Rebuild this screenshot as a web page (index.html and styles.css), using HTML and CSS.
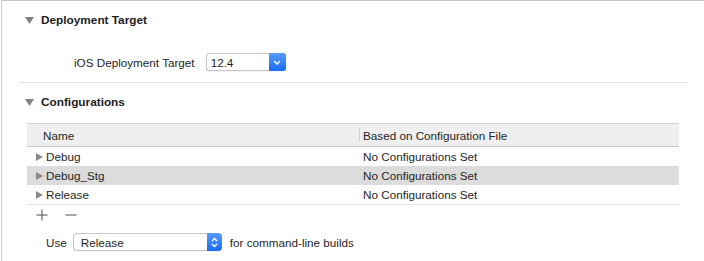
FILE: index.html
```html
<!DOCTYPE html>
<html>
<head>
<meta charset="utf-8">
<link rel="stylesheet" href="styles.css">
</head>
<body>
<div class="pane">
  <div class="section-head first">
    <svg class="tri-down" width="9" height="7" viewBox="0 0 9 7"><path d="M0 0H9L4.5 7Z" fill="#808080"/></svg>
    <span class="title">Deployment Target</span>
  </div>
  <div class="target-row">
    <span class="label">iOS Deployment Target</span>
    <div class="popup small">
      <span class="popup-text">12.4</span>
      <span class="popup-btn">
        <svg width="8" height="5" viewBox="0 0 8 5"><path d="M1 1L4 4L7 1" fill="none" stroke="#fff" stroke-width="1.4"/></svg>
      </span>
    </div>
  </div>
  <div class="sep"></div>
  <div class="section-head second">
    <svg class="tri-down" width="9" height="7" viewBox="0 0 9 7"><path d="M0 0H9L4.5 7Z" fill="#808080"/></svg>
    <span class="title">Configurations</span>
  </div>
  <div class="table">
    <div class="thead">
      <div class="col1 th">Name</div>
      <div class="col2 th"><span class="colsep"></span>Based on Configuration File</div>
    </div>
    <div class="row">
      <div class="col1"><svg class="tri-right" width="7" height="8" viewBox="0 0 7 8"><path d="M0 0L7 4L0 8Z" fill="#8a8a8a"/></svg>Debug</div>
      <div class="col2">No Configurations Set</div>
    </div>
    <div class="row sel">
      <div class="col1"><svg class="tri-right" width="7" height="8" viewBox="0 0 7 8"><path d="M0 0L7 4L0 8Z" fill="#8a8a8a"/></svg>Debug_Stg</div>
      <div class="col2">No Configurations Set</div>
    </div>
    <div class="row">
      <div class="col1"><svg class="tri-right" width="7" height="8" viewBox="0 0 7 8"><path d="M0 0L7 4L0 8Z" fill="#8a8a8a"/></svg>Release</div>
      <div class="col2">No Configurations Set</div>
    </div>
  </div>
  <div class="addrem">
    <svg width="12" height="12" viewBox="0 0 12 12"><path d="M6 0.5V11.5M0.5 6H11.5" stroke="#4a4a4a" stroke-width="1"/></svg>
    <svg class="minus" width="12" height="12" viewBox="0 0 12 12"><path d="M0.5 6H11.5" stroke="#4a4a4a" stroke-width="1"/></svg>
  </div>
  <div class="use-row">
    <span class="label">Use</span>
    <div class="popup wide">
      <span class="popup-text">Release</span>
      <span class="popup-btn stepper">
        <svg width="7" height="11" viewBox="0 0 7 11"><path d="M1 4L3.5 1.5L6 4M1 7L3.5 9.5L6 7" fill="none" stroke="#fff" stroke-width="1.3"/></svg>
      </span>
    </div>
    <span class="label">for command-line builds</span>
  </div>
</div>
</body>
</html>
```

FILE: styles.css
```css
html, body {
  margin: 0;
  padding: 0;
  background: #fff;
}
body {
  width: 704px;
  height: 261px;
  overflow: hidden;
  font-family: "Liberation Sans", Arial, sans-serif;
  font-size: 11.7px;
  color: #262626;
}
.pane {
  margin-left: 1px;
  height: 260px;
  border-top: 1px solid #c4c4c4;
  border-left: 1px solid #d0d0d0;
  display: flex;
  flex-direction: column;
}
.section-head {
  display: flex;
  align-items: center;
  padding-left: 23px;
  height: 18px;
}
.section-head.first { margin-top: 10px; }
.section-head.second { margin-top: 10px; }
.tri-down { margin-right: 7px; }
.title {
  font-weight: bold;
  font-size: 11.8px;
  color: #1e1e1e;
}
.target-row {
  display: flex;
  align-items: center;
  margin-top: 24px;
  padding-left: 72px;
  height: 18px;
}
.target-row .label { margin-right: 11px; }
.popup {
  display: flex;
  align-items: stretch;
  height: 18px;
  box-sizing: border-box;
  border: 1px solid #c6c6c6;
  border-right: none;
  border-radius: 3px;
  background: #fff;
  box-shadow: 0 0.5px 0 rgba(0,0,0,0.08);
}
.popup.small { width: 80px; }
.popup.wide { width: 149px; border-radius: 4px; }
.popup-text {
  flex: 1;
  display: flex;
  align-items: center;
  padding-left: 4px;
  color: #1e1e1e;
}
.popup.wide .popup-text { padding-left: 7px; }
.popup-btn {
  width: 17px;
  margin: -1px 0;
  display: flex;
  align-items: center;
  justify-content: center;
  background: linear-gradient(#5a9cfb, #1a6cf4);
  border-radius: 0 3px 3px 0;
}
.popup-btn.stepper { width: 15px; border-radius: 0 4px 4px 0; }
.sep {
  margin: 11px 16px 0 17px;
  height: 1px;
  background: #e2e2e2;
}
.table {
  margin: 12px 25px 0 25px;
  display: flex;
  flex-direction: column;
  border-bottom: 1px solid #e4e4e4;
}
.thead {
  display: flex;
  height: 24px;
  background: #efefef;
  border-top: 1px solid #cfcfcf;
  border-bottom: 1px solid #c8c8c8;
  box-sizing: border-box;
  align-items: center;
}
.row {
  display: flex;
  height: 19px;
  align-items: center;
}
.row.sel { background: #dcdcdc; }
.col1 {
  width: 332px;
  display: flex;
  align-items: center;
  padding-left: 9px;
  box-sizing: border-box;
}
.th.col1 { padding-left: 16px; }
.col2 {
  flex: 1;
  display: flex;
  align-items: center;
  padding-left: 4px;
  position: relative;
  height: 100%;
}
.th.col2 { padding-left: 4px; }
.colsep {
  position: absolute;
  left: 0;
  top: 4px;
  bottom: 4px;
  width: 1px;
  background: #d2d2d2;
}
.tri-right { margin-right: 3px; }
.addrem {
  display: flex;
  align-items: center;
  height: 12px;
  padding-left: 34px;
  margin-top: 4px;
}
.addrem .minus { margin-left: 17px; }
.use-row {
  display: flex;
  align-items: center;
  margin-top: 12px;
  padding-left: 44px;
  height: 18px;
}
.use-row .label:first-child { margin-right: 6px; }
.use-row .popup { margin-right: 8px; }
```
